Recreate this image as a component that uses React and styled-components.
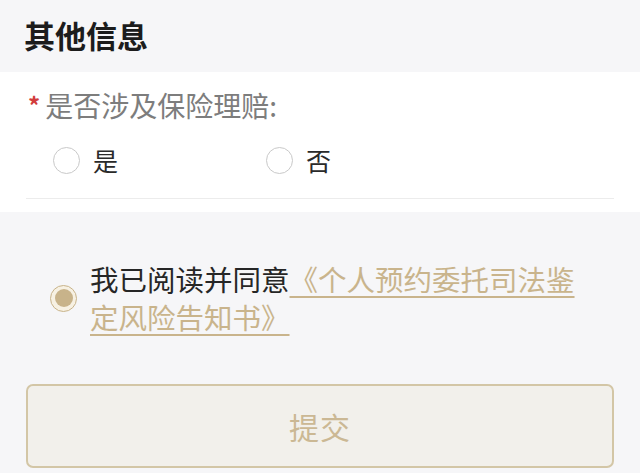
import React, { useState } from "react";
import styled, { createGlobalStyle } from "styled-components";

const GlobalStyle = createGlobalStyle`
  html, body {
    margin: 0;
    padding: 0;
    background: #f6f6f8;
  }
  body {
    font-family: "Noto Sans CJK SC", "Noto Sans", sans-serif;
  }
`;

const Page = styled.div`
  width: 640px;
  height: 473px;
  overflow: hidden;
  background: #f6f6f8;
`;

const Header = styled.h2`
  margin: 0;
  height: 72px;
  box-sizing: border-box;
  padding: 14px 0 0 24px;
  font-size: 31px;
  line-height: 42px;
  font-weight: 700;
  color: #1c1c1c;
`;

const Section = styled.div`
  background: #fff;
  padding: 0 26px 13px 26px;
`;

const Field = styled.div`
  border-bottom: 1.5px solid #ececec;
  padding: 14px 0 23px;
`;

const Label = styled.div`
  display: flex;
  align-items: center;
  font-size: 28px;
  line-height: 36px;
  color: #7d7d7d;
`;

const Star = styled.span`
  color: #d23c3c;
  font-size: 24px;
  font-weight: 700;
  margin: 0 5px 0 2px;
  align-self: flex-start;
  margin-top: 1px;
`;

const Options = styled.div`
  display: flex;
  padding: 22px 0 0 27px;
`;

const Option = styled.label`
  display: flex;
  align-items: center;
  gap: 13px;
  width: 213px;
  font-size: 25px;
  line-height: 30px;
  color: #2a2a2a;
  cursor: pointer;
`;

const Circle = styled.span`
  width: 27px;
  height: 27px;
  box-sizing: border-box;
  border-radius: 50%;
  border: 1.5px solid ${(p) => (p.$on ? "#c8b38a" : "#c9c9c9")};
  display: flex;
  align-items: center;
  justify-content: center;
  background: ${(p) => (p.$on ? "#f7f1e3" : "#fff")};
  &::after {
    content: "";
    width: 18px;
    height: 18px;
    border-radius: 50%;
    background: #c8b38a;
    display: ${(p) => (p.$on ? "block" : "none")};
  }
`;

const Agree = styled.div`
  display: flex;
  align-items: center;
  gap: 13px;
  padding: 48px 0 0 50px;
`;

const AgreeText = styled.div`
  width: 495px;
  font-size: 28.5px;
  line-height: 38px;
  color: #262626;
`;

const Link = styled.a`
  color: #c9b48c;
  text-decoration: underline;
  text-decoration-thickness: 2px;
  text-underline-offset: 5px;
`;

const Submit = styled.button`
  display: block;
  margin: 48px 26px 0;
  width: 588px;
  height: 84px;
  box-sizing: border-box;
  border: 2px solid #d3c6a6;
  border-radius: 7px;
  background: #f2f0eb;
  color: #cbb894;
  font-family: inherit;
  font-size: 30px;
  letter-spacing: 1px;
`;

export default function App() {
  const [claim, setClaim] = useState(null);
  return (
    <Page>
      <GlobalStyle />
      <Header>其他信息</Header>
      <Section>
        <Field>
          <Label>
            <Star>*</Star>是否涉及保险理赔:
          </Label>
          <Options>
            {["是", "否"].map((v) => (
              <Option key={v} onClick={() => setClaim(v)}>
                <Circle $on={claim === v} />
                {v}
              </Option>
            ))}
          </Options>
        </Field>
      </Section>
      <Agree>
        <Circle $on />
        <AgreeText>
          我已阅读并同意<Link>《个人预约委托司法鉴定风险告知书》</Link>
        </AgreeText>
      </Agree>
      <Submit>提交</Submit>
    </Page>
  );
}
